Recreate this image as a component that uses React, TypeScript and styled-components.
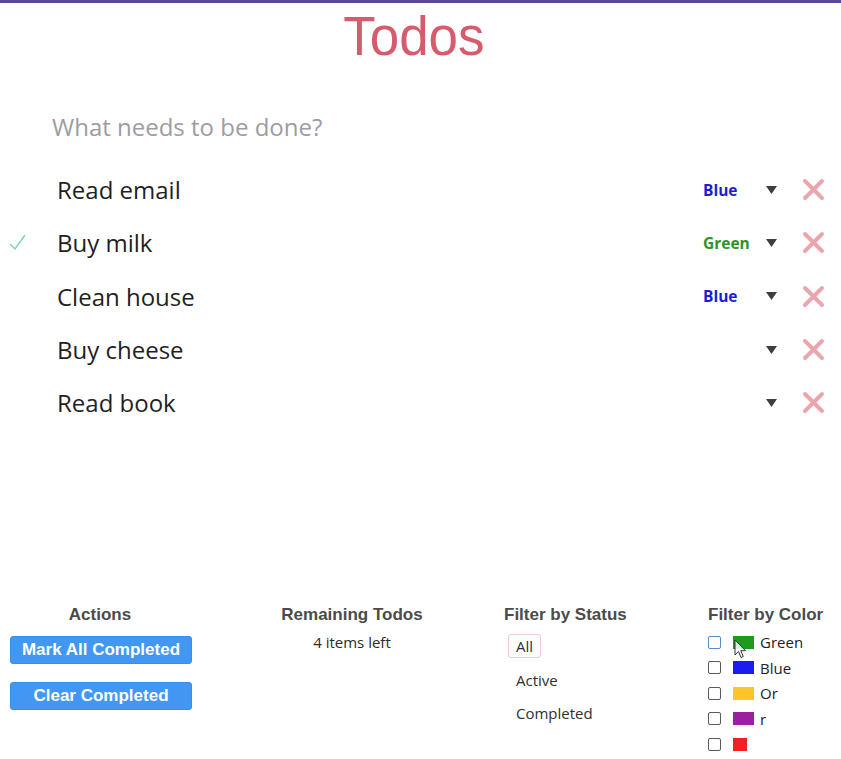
import React from "react";
import styled, { createGlobalStyle } from "styled-components";

const Global = createGlobalStyle`
  html, body { margin: 0; padding: 0; background: #ffffff; overflow: hidden; }
  * { box-sizing: border-box; }
`;

const Page = styled.div`
  position: relative;
  width: 841px;
  height: 759px;
  border-top: 3px solid #5a4799;
  font-family: "Open Sans", "Noto Sans", sans-serif;
`;

const Title = styled.h1`
  margin: 0;
  padding: 5px 14px 0 0;
  height: 61px;
  font-family: "Liberation Sans", Arial, sans-serif;
  font-weight: 400;
  font-size: 56px;
  line-height: 56px;
  color: #d65b6c;
  text-align: center;
  transform: scaleX(0.945);
`;

const NewTodo = styled.input`
  display: block;
  width: 100%;
  height: 56px;
  margin-top: 34px;
  padding: 0 0 0 52px;
  border: none;
  outline: none;
  background: transparent;
  font-family: "Open Sans", "Noto Sans", sans-serif;
  font-size: 24px;
  color: #222;
  &::placeholder { color: #9d9ca4; }
`;

const List = styled.ul`
  list-style: none;
  margin: 9px 0 0;
  padding: 0;
`;

const Row = styled.li`
  display: flex;
  align-items: center;
  height: 53.3px;
  padding-right: 16px;
`;

const Toggle = styled.div`
  width: 57px;
  padding-left: 9px;
  display: flex;
  align-items: center;
`;

const TodoText = styled.span`
  flex: 1;
  font-size: 24px;
  color: #1f1f1f;
`;

const ColorPick = styled.div<{ $c: string }>`
  width: 88px;
  display: flex;
  align-items: center;
  font-size: 15.5px;
  font-weight: 700;
  color: ${(p) => p.$c};
`;

const ColorName = styled.span`
  width: 63px;
`;

const Destroy = styled.button`
  margin-left: 11px;
  width: 23px;
  height: 23px;
  padding: 0;
  border: none;
  background: transparent;
  display: flex;
  align-items: center;
  justify-content: center;
`;

const Footer = styled.footer`
  display: grid;
  grid-template-columns: 200px 304px 204px 1fr;
  margin-top: 176px;
`;

const Col = styled.section<{ $center?: boolean }>`
  display: flex;
  flex-direction: column;
  align-items: ${(p) => (p.$center ? "center" : "flex-start")};
`;

const ColHead = styled.h5`
  margin: 0;
  font-family: "Liberation Sans", Arial, sans-serif;
  font-size: 17px;
  line-height: 20px;
  font-weight: 700;
  color: #4b4b4b;
`;

const Buttons = styled.div`
  margin-top: 11px;
  margin-left: 2px;
  display: flex;
  flex-direction: column;
  gap: 18px;
`;

const ActionButton = styled.button`
  width: 182px;
  height: 28px;
  padding: 0;
  border: 1px solid #3a8ee8;
  border-radius: 3px;
  background: #4197f1;
  color: #ffffff;
  font-family: "Liberation Sans", Arial, sans-serif;
  font-weight: 700;
  font-size: 17px;
`;

const Remaining = styled.div`
  margin-top: 7px;
  font-size: 15px;
  line-height: 20px;
  color: #2b2b2b;
`;

const StatusList = styled.ul`
  list-style: none;
  margin: 9px 0 0 4px;
  padding: 0;
  display: flex;
  flex-direction: column;
  gap: 9.5px;
`;

const StatusButton = styled.button<{ $selected?: boolean }>`
  height: 24px;
  padding: 0 7px;
  border: 1px solid ${(p) => (p.$selected ? "#f2c9d2" : "transparent")};
  border-radius: 3px;
  background: transparent;
  font-family: "Open Sans", "Noto Sans", sans-serif;
  font-size: 15px;
  color: #2f2f2f;
`;

const ColorList = styled.div`
  position: relative;
  margin-top: 4px;
  display: flex;
  flex-direction: column;
`;

const ColorRow = styled.label`
  display: flex;
  align-items: center;
  height: 25.5px;
  font-size: 15px;
  color: #222;
`;

const Check = styled.span<{ $hover?: boolean }>`
  width: 13px;
  height: 13px;
  border: 1px solid ${(p) => (p.$hover ? "#5a8ccc" : "#5a5a5a")};
  border-radius: 2px;
  background: #fff;
`;

const Swatch = styled.span<{ $c: string; $w?: number }>`
  width: ${(p) => p.$w ?? 21}px;
  height: 13px;
  margin-left: 12px;
  margin-right: 6px;
  background: ${(p) => p.$c};
`;

const Cursor = styled.svg`
  position: absolute;
  left: 26px;
  top: 10px;
`;

const CheckMark = () => (
  <svg width="17" height="17" viewBox="0 0 17 17">
    <polyline points="1,10 6,15 16,1" fill="none" stroke="#72d5bb" strokeWidth="1.4" />
  </svg>
);

const Arrow = () => (
  <svg width="11" height="8" viewBox="0 0 11 8">
    <polygon points="0,0 11,0 5.5,8" fill="#3e3e3e" />
  </svg>
);

const XIcon = () => (
  <svg width="23" height="23" viewBox="0 0 23 23">
    <path d="M3 3 L20 20 M20 3 L3 20" stroke="#eaa6af" strokeWidth="4" strokeLinecap="round" />
  </svg>
);

const todos = [
  { text: "Read email", color: "Blue", c: "#1d1dd4", done: false },
  { text: "Buy milk", color: "Green", c: "#2a962a", done: true },
  { text: "Clean house", color: "Blue", c: "#1d1dd4", done: false },
  { text: "Buy cheese", color: "", c: "#000", done: false },
  { text: "Read book", color: "", c: "#000", done: false },
];

const colors = [
  { c: "#1f9a1f", label: "Green", w: 21 },
  { c: "#1c1cf0", label: "Blue", w: 21 },
  { c: "#fdc52a", label: "Or", w: 21 },
  { c: "#9c1fa0", label: "r", w: 21 },
  { c: "#f22020", label: "", w: 14 },
];

export default function App() {
  return (
    <Page>
      <Global />
      <Title>Todos</Title>
      <NewTodo placeholder="What needs to be done?" />
      <List>
        {todos.map((t) => (
          <Row key={t.text}>
            <Toggle>{t.done && <CheckMark />}</Toggle>
            <TodoText>{t.text}</TodoText>
            <ColorPick $c={t.c}>
              <ColorName>{t.color}</ColorName>
              <Arrow />
            </ColorPick>
            <Destroy aria-label="delete">
              <XIcon />
            </Destroy>
          </Row>
        ))}
      </List>
      <Footer>
        <Col $center>
          <ColHead>Actions</ColHead>
          <Buttons>
            <ActionButton>Mark All Completed</ActionButton>
            <ActionButton>Clear Completed</ActionButton>
          </Buttons>
        </Col>
        <Col $center>
          <ColHead>Remaining Todos</ColHead>
          <Remaining>4 items left</Remaining>
        </Col>
        <Col>
          <ColHead>Filter by Status</ColHead>
          <StatusList>
            <li><StatusButton $selected>All</StatusButton></li>
            <li><StatusButton>Active</StatusButton></li>
            <li><StatusButton>Completed</StatusButton></li>
          </StatusList>
        </Col>
        <Col>
          <ColHead>Filter by Color</ColHead>
          <ColorList>
            {colors.map((c, i) => (
              <ColorRow key={c.c}>
                <Check $hover={i === 0} />
                <Swatch $c={c.c} $w={c.w} />
                {c.label}
              </ColorRow>
            ))}
            <Cursor width="13" height="20" viewBox="0 0 13 20">
              <path d="M1 1 L1 16 L4.5 12.5 L7 18.5 L9.3 17.5 L6.8 11.7 L11.5 11.7 Z" fill="#fff" fillOpacity="0.85" stroke="#333" strokeWidth="1" strokeLinejoin="round" />
            </Cursor>
          </ColorList>
        </Col>
      </Footer>
    </Page>
  );
}
